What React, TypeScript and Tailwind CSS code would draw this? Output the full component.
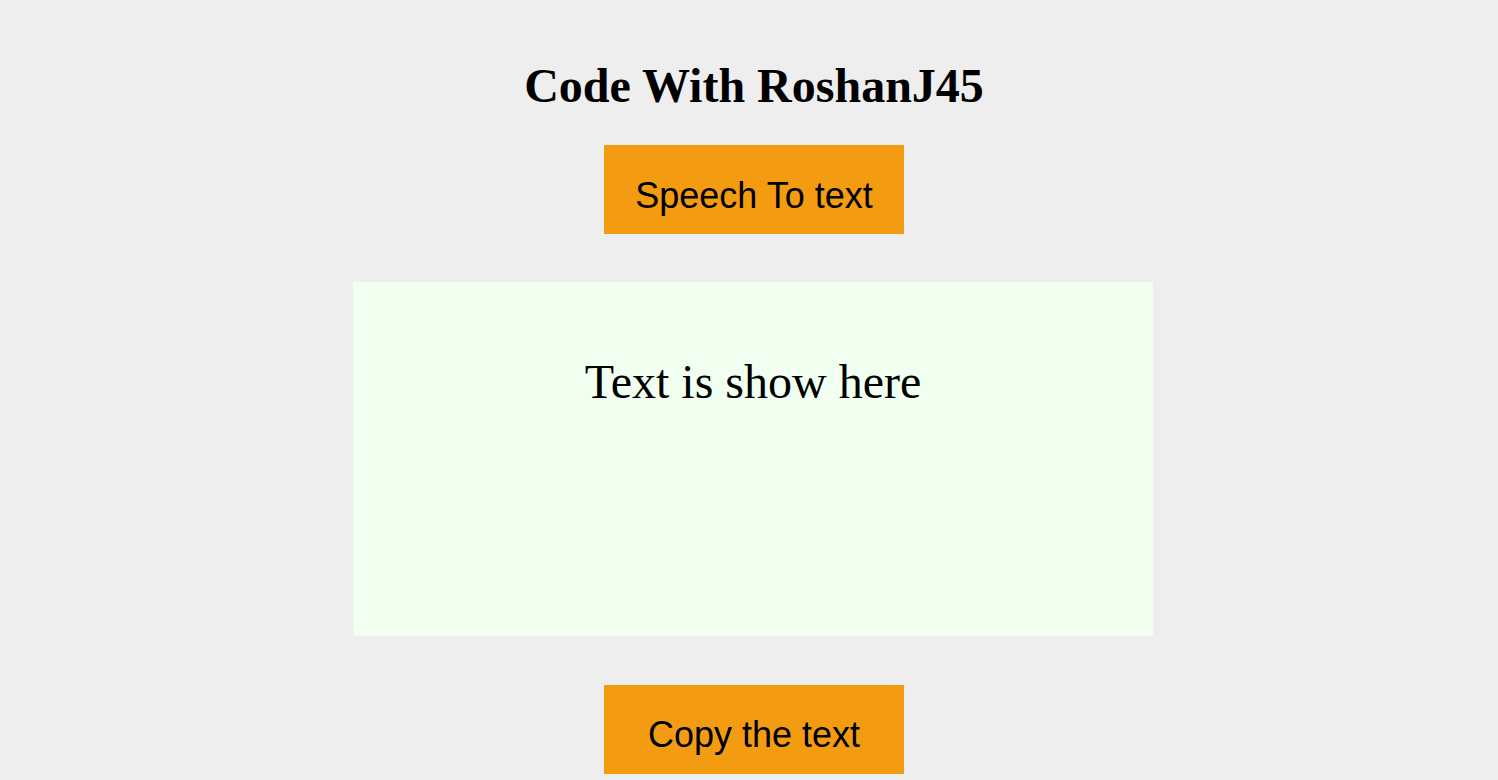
export default function App() {
  return (
    <div className="min-h-[780px] w-full bg-[#eeeeee] pl-[8px] flex flex-col items-center">
      <h1 className="mt-[58px] ml-[2px] text-[48px] leading-[55px] font-bold text-black font-['Liberation_Serif','Times_New_Roman',serif]">
        Code With RoshanJ45
      </h1>
      <button className="mt-[32px] ml-[2px] w-[300px] h-[89px] bg-[#f39c12] flex justify-center items-start pt-[31px] text-[36px] leading-[39px] text-black font-['Liberation_Sans',Arial,sans-serif]">
        Speech To text
      </button>
      <div className="mt-[48px] w-[800px] h-[354px] bg-[#f0fff0] pt-[72px] text-center text-[48px] leading-[55px] text-black font-['Liberation_Serif','Times_New_Roman',serif]">
        Text is show here
      </div>
      <button className="mt-[49px] ml-[2px] w-[300px] h-[89px] bg-[#f39c12] flex justify-center items-start pt-[30px] text-[36px] leading-[39px] text-black font-['Liberation_Sans',Arial,sans-serif]">
        Copy the text
      </button>
    </div>
  );
}
